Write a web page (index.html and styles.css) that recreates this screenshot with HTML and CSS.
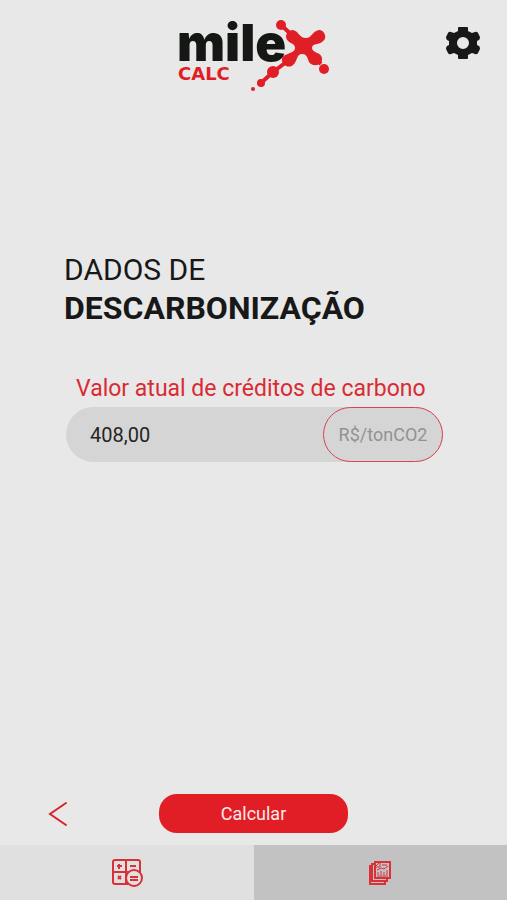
FILE: index.html
```html
<!DOCTYPE html>
<html lang="pt-BR">
<head>
<meta charset="utf-8">
<meta name="viewport" content="width=device-width, initial-scale=1">
<title>Milex Calc</title>
<link rel="stylesheet" href="styles.css">
</head>
<body>
<div class="app">
  <header class="header">
    <svg class="logo" viewBox="0 0 170 90" role="img" aria-label="milex calc">
      <text class="logo-name" x="8" y="51">mile</text>
      <text class="logo-sub" x="9" y="70">CALC</text>
      <g class="logo-mark">
        <path class="logo-link" d="M112 15L124 26M147 49L152 54M120 50L104 62L92 73"/>
        <path d="M124 20C130 21 130 28 137 28C143 28 143 21 150 20C156 20 159 29 153 32C149 35 143 33 143 38C143 43 152 42 153 48C154 54 147 57 142 54C138 52 140 44 133 44C127 44 129 51 124 55C120 59 112 55 113 49C114 43 126 44 126 38C126 32 118 34 117 27C117 23 120 20 124 20Z"/>
        <circle cx="112" cy="15" r="5"/>
        <circle cx="155" cy="59" r="5"/>
        <circle cx="104" cy="62" r="6"/>
        <circle cx="92" cy="73" r="4"/>
        <circle cx="84" cy="79" r="2"/>
      </g>
    </svg>
    <button class="icon-button settings" type="button" aria-label="Configurações">
      <svg viewBox="0 0 34 32"><path fill-rule="evenodd" d="M12 1Q12 0 13 0H21Q22 0 22 1V4L26 6L29 5Q31 4 32 6L34 10Q34 12 33 13L31 14V18L33 19Q34 20 34 22L32 26Q31 28 29 27L26 26L22 28V31Q22 32 21 32H13Q12 32 12 31V28L8 26L5 27Q3 28 2 26L0 22Q0 20 1 19L3 18V14L1 13Q0 12 0 10L2 6Q3 4 5 5L8 6L12 4ZM17 10A6 6 0 1 0 17 22A6 6 0 1 0 17 10Z"/></svg>
    </button>
  </header>
  <main class="content">
    <h1 class="title">DADOS DE <strong>DESCARBONIZAÇÃO</strong></h1>
    <form class="form" id="carbon-form">
      <label class="label" for="credit">Valor atual de créditos de carbono</label>
      <div class="field">
        <input class="value" id="credit" type="text" inputmode="decimal" value="408,00">
        <span class="unit">R$/tonCO2</span>
      </div>
    </form>
  </main>
  <div class="actions">
    <button class="icon-button back" type="button" aria-label="Voltar">
      <svg viewBox="0 0 20 26"><path d="M18 2L2 13L18 24"/></svg>
    </button>
    <button class="submit" type="submit" form="carbon-form">Calcular</button>
  </div>
  <nav class="tabs">
    <a class="tab" href="#calculadora" aria-label="Calculadora">
      <svg class="calc-icon" viewBox="0 0 32 30">
        <path d="M20 26H4Q2 26 2 24V4Q2 2 4 2H27Q29 2 29 4V16M2 14H21M15 2V26M6 8H11M8 6V11M19 8H25M7 18L10 21M10 18L7 21"/>
        <circle cx="23" cy="20" r="8"/>
        <path d="M19 19H27M19 22H27"/>
      </svg>
    </a>
    <a class="tab tab-reports" href="#relatorios" aria-label="Relatórios">
      <svg class="report-icon" viewBox="0 0 24 25">
        <path class="sheet" d="M4 6H2V24H17V22M6 4H4V21H19V19"/>
        <path class="sheet" d="M7 2H22V18H7Z"/>
        <path d="M8 7H12V3M8 6L11 3M14 5H19M9 10L13 8L16 9L20 6M10 15V12M13 15V11M16 15V12M19 15V10M9 16H20"/>
      </svg>
    </a>
  </nav>
</div>
</body>
</html>
```
FILE: styles.css
```css
* {
  box-sizing: border-box;
}

body {
  margin: 0;
  background: #e8e8e8;
  color: #171817;
  font-family: Roboto, "Liberation Sans", sans-serif;
}

button,
input {
  font: inherit;
}

.app {
  display: flex;
  flex-direction: column;
  min-height: 100vh;
}

.header {
  display: grid;
  grid-template-columns: 1fr auto 1fr;
  align-items: start;
  padding: 10px 27px 0;
}

.logo {
  grid-column: 2;
  width: 170px;
  height: 90px;
}

.logo-name {
  fill: #151714;
  font: 900 51px Inter, sans-serif;
}

.logo-sub {
  fill: #e01e26;
  font: 700 18px "DejaVu Sans", sans-serif;
}

.logo-mark {
  fill: #e01e26;
}

.logo-link {
  fill: none;
  stroke: #e01e26;
  stroke-width: 4;
}

.icon-button {
  display: flex;
  padding: 0;
  border: 0;
  background: none;
  cursor: pointer;
}

.settings {
  justify-self: end;
  margin-top: 17px;
}

.settings svg {
  width: 34px;
  height: 32px;
  fill: #171817;
}

.content {
  flex: 1;
  padding: 151px 64px 40px;
}

.title {
  margin: 0;
  font-size: 30px;
  font-weight: 400;
  line-height: 38px;
}

.title strong {
  display: block;
  font-size: 32px;
  font-weight: 700;
}

.form {
  margin-top: 49px;
}

.label {
  display: block;
  padding-left: 12px;
  color: #da2b34;
  font-size: 23px;
  line-height: 26px;
  white-space: nowrap;
}

.field {
  display: flex;
  height: 55px;
  margin: 5px 0 0 2px;
  border-radius: 28px;
  background: #d5d5d5;
}

.value {
  flex: 1;
  min-width: 0;
  padding: 0 24px;
  border: 0;
  border-radius: 28px;
  background: none;
  color: #242424;
  font-size: 20px;
}

.unit {
  display: flex;
  align-items: center;
  justify-content: center;
  width: 120px;
  border: 1px solid #d9434a;
  border-radius: 28px;
  color: #929292;
  font-size: 18px;
}

.actions {
  display: grid;
  grid-template-columns: 1fr 189px 1fr;
  align-items: center;
  padding: 0 48px 12px;
}

.back svg {
  width: 20px;
  height: 26px;
  fill: none;
  stroke: #d9222b;
  stroke-width: 2;
  stroke-linecap: round;
}

.submit {
  height: 39px;
  border: 0;
  border-radius: 18px;
  background: #e11e26;
  color: #fbeaea;
  font-size: 18px;
  cursor: pointer;
}

.tabs {
  display: grid;
  grid-template-columns: 1fr 1fr;
  height: 55px;
}

.tab {
  display: flex;
  align-items: center;
  justify-content: center;
  background: #e0e0e0;
}

.tab-reports {
  background: #c2c2c2;
}

.tab svg {
  fill: none;
  stroke: #da3038;
}

.calc-icon {
  width: 32px;
  height: 30px;
  stroke-width: 2;
}

.calc-icon circle {
  fill: #e0e0e0;
}

.report-icon {
  width: 24px;
  height: 25px;
  stroke-width: 1;
}

.sheet {
  stroke-width: 2;
}
```
